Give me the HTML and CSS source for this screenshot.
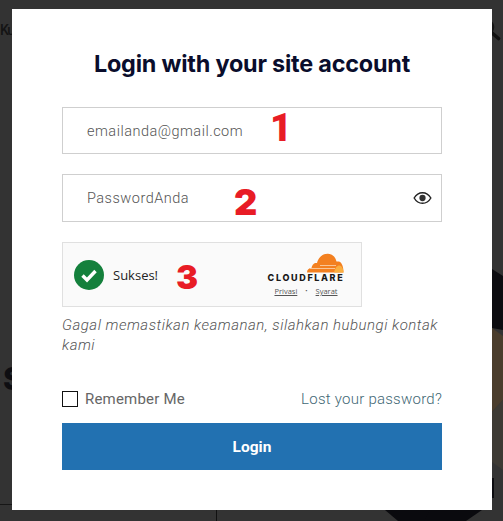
FILE: index.html
```html
<!DOCTYPE html>
<html lang="id">
<head>
<meta charset="utf-8">
<title>Login</title>
<link rel="stylesheet" href="styles.css">
</head>
<body>
<div class="backdrop">
  <span class="bg-ku">Ku</span>
  <svg class="bg-search" viewBox="0 0 24 22" width="24" height="22"><circle cx="8" cy="8" r="7" fill="none" stroke="#151515" stroke-width="2.600"/><path d="M13.500 13.500L20.500 19.500" stroke="#111" stroke-width="3.600" stroke-linecap="round"/></svg>
  <span class="bg-s">S</span>
  <div class="bg-line-h"></div>
  <div class="bg-line-v"></div>
  <svg class="bg-shape" viewBox="0 0 503 521" width="503" height="521">
    <path d="M492 269L503 276V330L492 328Z" fill="#0c0c10"/>
    <path d="M492 328L503 336V400L492 412V328Z" fill="#4a3d2c"/>
    <path d="M492 412L503 400V470L492 462Z" fill="#3d3a34"/>
    <path d="M492 478H494V498H492Z" fill="#0c0c10"/>
    <path d="M385 510H455L438 521H398Z" fill="#0a0a0e"/>
    <path d="M430 510H482L466 521H424Z" fill="#0a0a0e"/>
  </svg>
</div>

<main class="modal">
  <h1 class="title">Login with your site account</h1>
  <div class="field">
    <span class="placeholder">emailanda@gmail.com</span>
    <span class="mark mark-1">1</span>
  </div>
  <div class="field field-pass">
    <span class="placeholder">PasswordAnda</span>
    <span class="mark mark-2">2</span>
    <svg class="eye" viewBox="0 0 20 14" width="19" height="14"><path d="M1.200 7C3.300 3.400 6.400 1.400 10 1.400S16.700 3.400 18.800 7C16.700 10.600 13.600 12.600 10 12.600S3.300 10.600 1.200 7Z" fill="none" stroke="#222" stroke-width="1.500"/><circle cx="10" cy="7" r="3.300" fill="#333"/></svg>
  </div>
  <div class="captcha">
    <svg class="check" viewBox="0 0 30 30" width="30" height="30"><circle cx="15" cy="15" r="15" fill="#14803c"/><path d="M8.500 15.500L13 20L21.500 11" fill="none" stroke="#fff" stroke-width="3.400"/></svg>
    <span class="sukses">Sukses!</span>
    <span class="mark mark-3">3</span>
    <div class="cf">
      <svg class="cf-cloud" viewBox="0 0 38 20" width="38" height="20"><path d="M1 19.500C1 16.500 3 15 5.500 15C6.500 10.500 9 9.500 11 10C12.500 4 17 .5 22 .8C26.500 1 29.500 4 30.500 8.500L33 8.500C36 9.500 37.500 14 37.500 19.500Z" fill="#f38020"/><path d="M28 19.500C29 15 31 12.500 33.500 12.500C36 13 37.500 16 37.500 19.500Z" fill="#faae40"/><path d="M4 15.500H29M14 12.500H30" stroke="#fbe3c8" stroke-width=".7"/></svg>
      <span class="cf-name">CLOUDFLARE</span>
      <span class="cf-links"><a class="cf-link">Privasi</a><span class="cf-dot">•</span><a class="cf-link">Syarat</a></span>
    </div>
  </div>
  <p class="note">Gagal memastikan keamanan, silahkan hubungi kontak kami</p>
  <div class="row">
    <label class="remember"><span class="box"></span>Remember Me</label>
    <a class="lost">Lost your password?</a>
  </div>
  <button class="submit" type="button">Login</button>
</main>
</body>
</html>
```
FILE: styles.css
```css
* { box-sizing: border-box; }
html, body { margin: 0; height: 100%; }
body {
  width: 503px;
  height: 521px;
  overflow: hidden;
  position: relative;
  background: #333333;
  font-family: Roboto, "Liberation Sans", sans-serif;
  padding: 9px 0 0 12px;
}

/* dimmed page behind the dialog */
.backdrop { position: absolute; inset: 0; overflow: hidden; }
.bg-ku { position: absolute; left: 0; top: 20px; font: 500 14px/20px Roboto, sans-serif; letter-spacing: -1.500px; color: #141414; }
.bg-search { position: absolute; left: 478px; top: 19px; }
.bg-s { position: absolute; left: 3px; top: 360px; font: 800 31px/38px Inter, sans-serif; color: #0e0e12; }
.bg-line-h { position: absolute; left: 0; top: 504px; width: 14px; height: 1px; background: #161616; }
.bg-line-v { position: absolute; left: 216px; top: 510px; width: 1px; height: 11px; background: #111; }
.bg-shape { position: absolute; left: 0; top: 0; }

.modal {
  position: relative;
  width: 480px;
  height: 501px;
  background: #fff;
  padding: 38px 50px 0;
}
.title {
  margin: 0 0 27px;
  text-align: center;
  font: 700 23.400px/33px Inter, "Liberation Sans", sans-serif;
  letter-spacing: -0.2px;
  color: #0a0d2c;
}
.field {
  position: relative;
  height: 47px;
  margin-bottom: 20px;
  padding: 1px 0 0 24px;
  display: flex;
  align-items: center;
  border: 1px solid #cfcfcf;
}
.field-pass { height: 48px; }
.placeholder {
  font-size: 14.500px;
  font-weight: 300;
  letter-spacing: 0.5px;
  color: #555;
}
.mark {
  position: absolute;
  font-family: Inter, sans-serif;
  font-weight: 900;
  font-size: 36px;
  line-height: 36px;
  color: #e81c25;
}
.mark-1 { left: 207px; top: 2px; font-family: Roboto, sans-serif; font-size: 38px; }
.mark-2 { left: 171px; top: 9px; }
.mark-3 { left: 113px; top: 16px; font-size: 33px; }
.eye { position: absolute; right: 9px; top: 16px; }

.captcha {
  position: relative;
  width: 300px;
  height: 65px;
  display: flex;
  align-items: center;
  padding-left: 11px;
  background: #fafafa;
  border: 1px solid #e0e0e0;
}
.sukses {
  margin-left: 9px;
  font: 400 13px/16px "Open Sans", sans-serif;
  color: #232323;
}
.cf {
  margin-left: auto;
  margin-right: 16px;
  width: 78px;
  display: flex;
  flex-direction: column;
  align-items: center;
}
.cf-cloud { align-self: flex-end; margin-right: 1px; }
.cf-name {
  font: 800 9px/10px Inter, sans-serif;
  letter-spacing: 1.650px;
  color: #1a1a1a;
  white-space: nowrap;
}
.cf-links {
  display: flex;
  gap: 8px;
  align-items: center;
  margin-top: 3px;
  font: 400 7.500px/10px "Open Sans", sans-serif;
  color: #555;
}
.cf-link { text-decoration: underline; }
.cf-dot { font-size: 6px; }

.note {
  margin: 8px 0 0;
  font-style: italic;
  font-weight: 300;
  font-size: 15px;
  line-height: 20px;
  letter-spacing: 0.5px;
  color: #555;
}
.row {
  display: flex;
  justify-content: space-between;
  align-items: center;
  height: 20px;
  margin-top: 34px;
}
.remember {
  display: flex;
  align-items: center;
  gap: 7px;
  font-size: 15px;
  letter-spacing: 0.2px;
  color: #666;
}
.box {
  width: 16px;
  height: 16px;
  border: 1px solid #111;
  background: #fff;
}
.lost {
  font-size: 15px;
  font-weight: 300;
  letter-spacing: 0.25px;
  color: #3f6875;
}
.submit {
  display: block;
  width: 100%;
  height: 47px;
  margin-top: 14px;
  padding-top: 1px;
  border: 0;
  background: #2271b1;
  color: #fff;
  font: 700 15.500px/20px Roboto, sans-serif;
}
```
